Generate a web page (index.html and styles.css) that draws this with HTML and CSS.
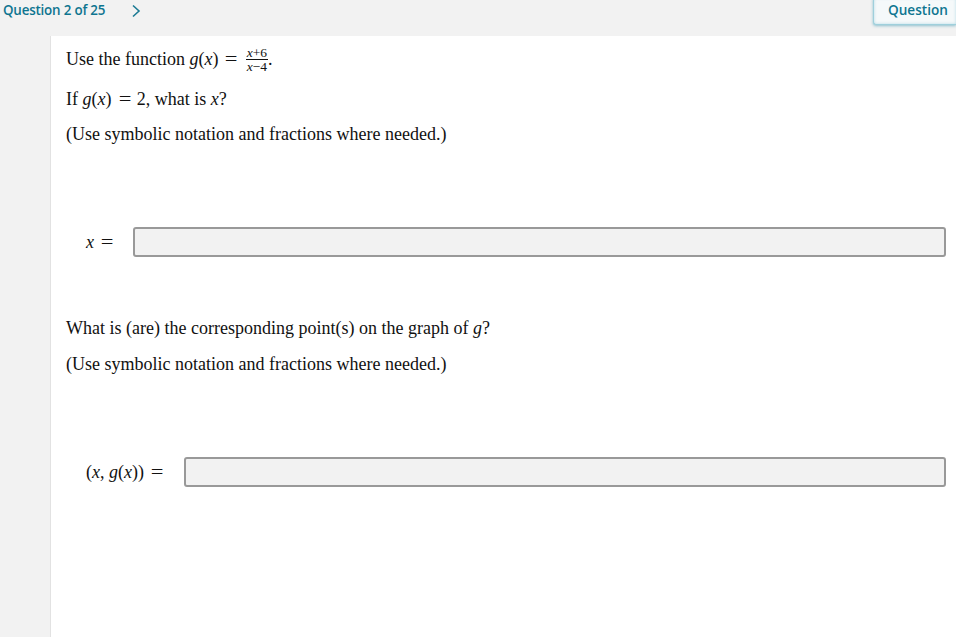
FILE: index.html
```html
<!DOCTYPE html>
<html>
<head>
<meta charset="utf-8">
<link rel="stylesheet" href="styles.css">
</head>
<body>
<header class="topbar">
  <div class="qnav">
    <span class="qcount">Question 2 of 25</span>
    <svg class="chev" width="10" height="14" viewBox="0 0 10 14"><path d="M2 1.5 L8 7 L2 12.5" fill="none" stroke="#1b7a93" stroke-width="1.6"/></svg>
  </div>
  <button class="qbtn">Question</button>
</header>
<main class="panel">
  <p class="line l1">Use the function <span class="m">g</span>(<span class="m">x</span>)<span class="eq">=</span><span class="frac"><span class="num"><span class="m">x</span>+6</span><span class="den"><span class="m">x</span>−4</span></span>.</p>
  <p class="line l2">If <span class="m">g</span>(<span class="m">x</span>)<span class="eq">=</span>2, what is <span class="m">x</span>?</p>
  <p class="line l3">(Use symbolic notation and fractions where needed.)</p>
  <div class="answer a1">
    <span class="label"><span class="m">x</span><span class="eq">=</span></span>
    <div class="box"></div>
  </div>
  <p class="line l4">What is (are) the corresponding point(s) on the graph of <span class="m">g</span>?</p>
  <p class="line l5">(Use symbolic notation and fractions where needed.)</p>
  <div class="answer a2">
    <span class="label">(<span class="m">x</span>, <span class="m">g</span>(<span class="m">x</span>))<span class="eq">=</span></span>
    <div class="box"></div>
  </div>
</main>
</body>
</html>
```
FILE: styles.css
```css
html, body {
  margin: 0;
  padding: 0;
  height: 100%;
  overflow: hidden;
}
body {
  background: #f2f2f2;
  font-family: "Liberation Serif", "Times New Roman", serif;
  display: flex;
  flex-direction: column;
}
.topbar {
  height: 36px;
  display: flex;
  justify-content: space-between;
  align-items: flex-start;
  flex-shrink: 0;
}
.qnav {
  display: flex;
  align-items: center;
  padding: 1px 0 0 3px;
}
.qcount {
  font-family: "Open Sans", "Noto Sans", sans-serif;
  font-weight: 600;
  font-size: 13.4px;
  color: #0e7590;
  letter-spacing: -0.2px;
}
.chev {
  margin-left: 26px;
  margin-top: 1px;
}
.qbtn {
  margin-top: -3px;
  width: 83px;
  height: 28px;
  padding: 0 0 4px 14px;
  text-align: left;
  font-family: "Open Sans", "Noto Sans", sans-serif;
  font-weight: 600;
  font-size: 13.6px;
  color: #0e7590;
  background: #f5f9fa;
  border: 1px solid #9fd0dc;
  border-right: none;
  border-radius: 3px 0 0 3px;
  box-shadow: 0 1px 3px rgba(60, 150, 175, 0.55), inset 0 0 3px rgba(120, 190, 210, 0.5);
}
.panel {
  flex: 1;
  margin-left: 50px;
  background: #fff;
  border-left: 1px solid #e2e2e2;
  padding: 9px 10px 0 15px;
  color: #111;
  font-size: 18px;
}
.line {
  margin: 0;
  height: 20px;
  line-height: 20px;
  white-space: nowrap;
}
.m { font-style: italic; }
.eq {
  display: inline-block;
  margin: 0 7px 0 8px;
  transform: scaleX(1.25);
}
.l1 { margin-top: 1px; }
.l2 { margin-top: 23px; }
.l3 { margin-top: 15px; }
.l4 { margin-top: 61px; }
.l5 { margin-top: 16px; }
.frac {
  display: inline-block;
  vertical-align: -6px;
  font-size: 13.5px;
  line-height: 13px;
  text-align: center;
  margin-left: 2px;
}
.num, .den { display: block; padding: 0 1px; }
.num { border-bottom: 1px solid #111; }
.answer {
  display: flex;
  align-items: center;
}
.a1 { margin-top: 83px; }
.a2 { margin-top: 83px; }
.label {
  padding-left: 20px;
  white-space: nowrap;
}
.a1 .label { width: 47px; }
.a2 .label { width: 98px; }
.box {
  flex: 1;
  height: 26px;
  background: #f2f2f2;
  border: 2px solid #999;
  border-radius: 3px;
  box-sizing: content-box;
}
```
